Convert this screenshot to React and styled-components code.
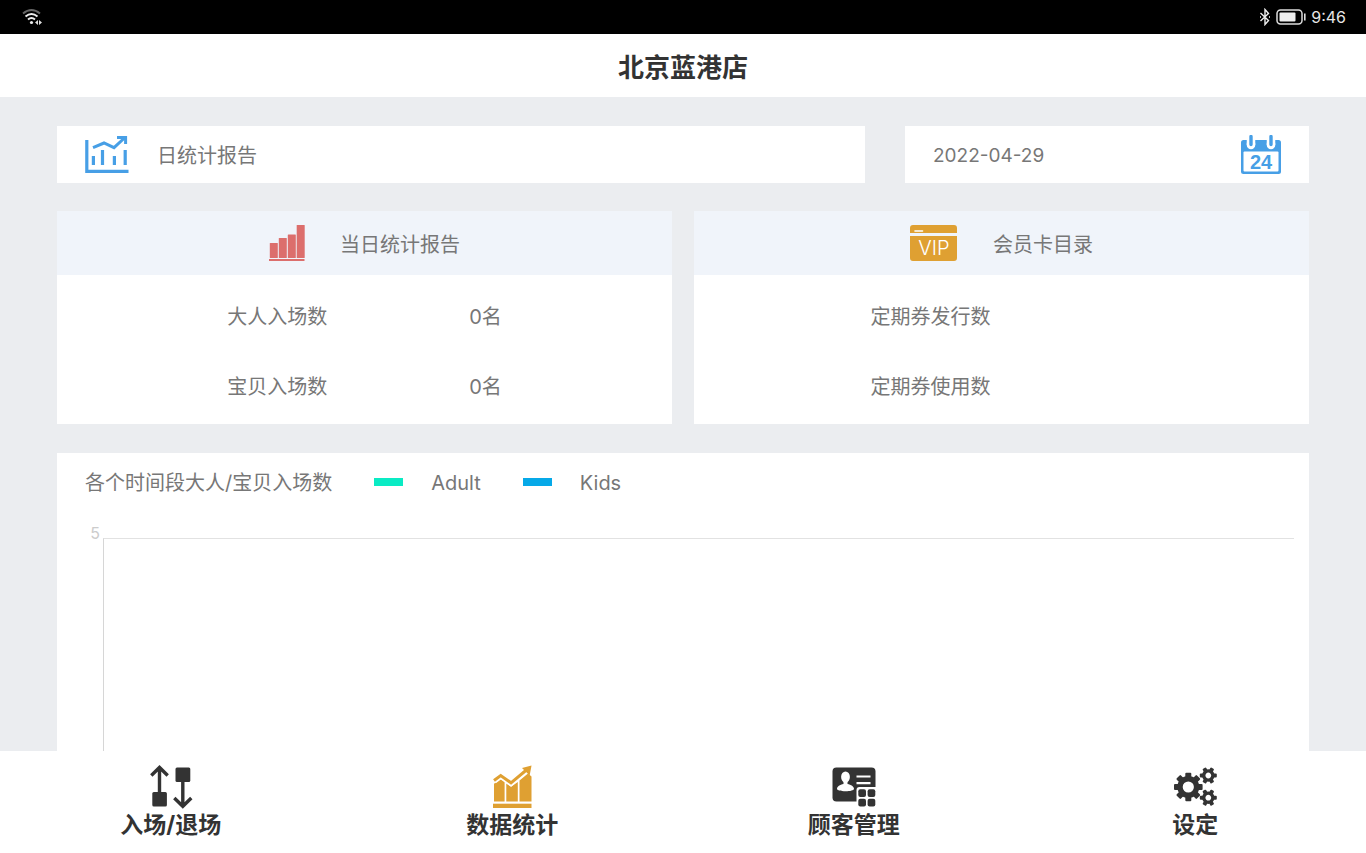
import React, {useState} from 'react';
import styled, {createGlobalStyle} from 'styled-components';

const hourlyMax = 5;

const panels = [
  {
    title: '当日统计报告',
    icon: 'bars',
    rows: [
      {label: '大人入场数', value: '0名'},
      {label: '宝贝入场数', value: '0名'}
    ]
  },
  {
    title: '会员卡目录',
    icon: 'vip',
    rows: [
      {label: '定期券发行数', value: ''},
      {label: '定期券使用数', value: ''}
    ]
  }
];

const series = [
  {name: 'Adult', color: '#0aebc4'},
  {name: 'Kids', color: '#06a9e8'}
];

const WifiIcon = () => (
  <svg width="24" height="20" viewBox="0 0 24 20" fill="none" strokeWidth="2">
    <path d="M3 6.5Q11.500-.5 20 6.500" stroke="#666" />
    <path d="M5.500 9.500Q11.500 4.500 17.500 9.500" stroke="#eee" />
    <path d="M8 12.500Q11.500 9.500 15 12.500" stroke="#eee" />
    <circle cx="11.500" cy="15.500" r="1.600" fill="#eee" />
    <path d="M18 13v5l-3-2.500zM19 13v5l3-2.500z" fill="#ddd" />
  </svg>
);

const BluetoothIcon = () => (
  <svg width="12" height="18" viewBox="0 0 12 18" fill="none" stroke="#eee" strokeWidth="1.400">
    <path d="M1.500 5l8 7.500L6 16.500v-15L9.500 5.500l-8 7.500" />
    <path d="M1 9h1M10 9h1" />
  </svg>
);

const BatteryIcon = () => (
  <svg width="30" height="16" viewBox="0 0 30 16">
    <rect x="1" y="1" width="25" height="14" rx="3.500" fill="none" stroke="#ddd" strokeWidth="1.500" />
    <rect x="3.500" y="3.500" width="16" height="9" rx="1" fill="#eee" />
    <rect x="28" y="4.500" width="1.600" height="7" fill="#ddd" />
  </svg>
);

const ReportIcon = () => (
  <svg width="44" height="40" viewBox="0 0 44 40" fill="none" stroke="#479fe6" strokeWidth="3.200">
    <path d="M1.800 5v31.400H43.500" />
    <path d="M8.400 30v-9M17.500 30V15M29.400 30v-9M40.200 30V15" />
    <path d="M8 12.600l11-4.600 10 4.600L40.500 2" strokeWidth="3" />
    <path d="M32 2.400h8.600V9" strokeWidth="3" />
  </svg>
);

const CalendarIcon = () => (
  <svg width="40" height="40" viewBox="0 0 40 40">
    <rect y="5" width="40" height="34" rx="2.500" fill="#479fe6" />
    <rect x="2.500" y="16.500" width="35" height="20" rx="1" fill="#fff" />
    <path d="M10 0v10M30 0v10" stroke="#fff" strokeWidth="8.500" />
    <path d="M10 8.500v1.500M30 8.500v1.500" stroke="#fff" strokeWidth="8.500" strokeLinecap="round" />
    <path d="M10 1.500v8M30 1.500v8" stroke="#479fe6" strokeWidth="3.400" strokeLinecap="round" />
    <text x="20" y="34" textAnchor="middle" fontFamily="Liberation Sans, sans-serif" fontSize="20" fontWeight="700" fill="#479fe6">24</text>
  </svg>
);

const BarsIcon = () => (
  <svg width="36" height="36" viewBox="0 0 36 36" fill="#dc6e6c">
    <rect x=".800" y="18" width="8" height="15" rx=".500" />
    <rect x="9.800" y="13" width="8" height="20" rx=".500" />
    <rect x="18.800" y="9.500" width="8" height="23.500" rx=".500" />
    <rect x="27.700" y="0" width="8" height="33" rx=".500" />
    <rect y="34" width="35.500" height="2" />
  </svg>
);

const VipIcon = () => (
  <svg width="48" height="36" viewBox="0 0 48 36">
    <path d="M3 0h41a3 3 0 0 1 3 3v5H0V3a3 3 0 0 1 3-3zM0 11h47v22a3 3 0 0 1-3 3H3a3 3 0 0 1-3-3z" fill="#dfa032" />
    <path d="M5 6h7.500" stroke="#fff" strokeWidth="1.600" strokeLinecap="round" />
    <text x="24" y="30" textAnchor="middle" fontFamily="Inter, sans-serif" fontSize="20" fontWeight="300" fill="#fff">VIP</text>
  </svg>
);

const EntryIcon = () => (
  <svg width="44" height="44" viewBox="0 0 44 44" fill="none" stroke="#333" strokeWidth="3.400">
    <path d="M10.500 30V3M2.300 10.500l8.200-8 8.200 8" />
    <rect x="3.300" y="27" width="14.600" height="14.500" rx="1.500" fill="#333" stroke="none" />
    <path d="M33.800 14v26M25.300 33l8.500 8.300 8.500-8.300" />
    <rect x="26.500" y="2.500" width="14.800" height="14.500" rx="1.500" fill="#333" stroke="none" />
  </svg>
);

const StatsIcon = () => (
  <svg width="44" height="44" viewBox="0 0 44 44" fill="#dfa032">
    <rect x="3" y="38.700" width="38.500" height="4.300" />
    <path d="M4 18.800l6.700-4.700 3.900 3V36.500H4zM16.300 18.500l4.700 3.200 6.800-4.600v19.400H16.300zM29.500 15.500l8.500-7 3.500 3v25h-12z" />
    <path d="M4 16l6.700-5.200L21 18 37 4.500" fill="none" stroke="#fff" strokeWidth="6" />
    <path d="M4 15.500l6.700-5 10.300 7.300L37 4.500" fill="none" stroke="#dfa032" strokeWidth="3" />
    <path d="M41.500.500l-9.500 2.600 7.700 7.400z" />
  </svg>
);

const CustomerIcon = () => (
  <svg width="44" height="44" viewBox="0 0 44 44">
    <rect x=".500" y="2.500" width="43" height="34" rx="4" fill="#333" />
    <g fill="#fff">
      <ellipse cx="13.500" cy="12" rx="4.400" ry="5.500" />
      <path d="M11.500 15h4v4c3.500.700 6.500 2.500 6.500 5 0 1.200-3.800 2.300-8.500 2.300S5 25.200 5 24c0-2.500 3-4.300 6.500-5z" />
      <path d="M24.500 10.400h14v2.200h-14zM24.500 17h14v2.200h-14z" />
      <path d="M24.500 25a3 3 0 0 1 3-3H44v22H24.500z" />
    </g>
    <g fill="#333">
      <rect x="26.300" y="24.300" width="7.700" height="7.700" rx="2" />
      <rect x="35.600" y="24.300" width="7.700" height="7.700" rx="2" />
      <rect x="26.300" y="33.700" width="7.700" height="7.700" rx="2" />
      <rect x="35.600" y="33.700" width="7.700" height="7.700" rx="2" />
    </g>
  </svg>
);

const Gear = ({x, y, r, body, hole, teeth, tooth}) => (
  <g transform={`translate(${x} ${y})`} fill="#333">
    {Array.from({length: teeth}, (_, i) => (
      <rect
        key={i}
        x={-tooth / 2}
        y={-r}
        width={tooth}
        height={r - hole - 1}
        rx="1"
        transform={`rotate(${90 + (360 / teeth) * i})`}
      />
    ))}
    <circle r={(body + hole) / 2} fill="none" stroke="#333" strokeWidth={body - hole} />
  </g>
);

const SettingsIcon = () => (
  <svg width="44" height="44" viewBox="0 0 44 44">
    <Gear x={15.300} y={22} r={14.300} body={11} hole={5.600} teeth={8} tooth={6} />
    <Gear x={35.300} y={10.500} r={8.500} body={6.200} hole={2.900} teeth={6} tooth={4} />
    <Gear x={35.300} y={32.700} r={8.500} body={6.200} hole={2.900} teeth={6} tooth={4} />
  </svg>
);

const tabs = [
  {id: 'entry', label: '入场/退场', Icon: EntryIcon},
  {id: 'stats', label: '数据统计', Icon: StatsIcon},
  {id: 'customers', label: '顾客管理', Icon: CustomerIcon},
  {id: 'settings', label: '设定', Icon: SettingsIcon}
];

const App = () => {
  const [date, setDate] = useState('2022-04-29');

  return (
    <Screen>
      <GlobalStyle />
      <StatusBar>
        <WifiIcon />
        <StatusRight>
          <BluetoothIcon />
          <BatteryIcon />
          <time>9:46</time>
        </StatusRight>
      </StatusBar>
      <TitleBar>
        <h1>北京蓝港店</h1>
      </TitleBar>
      <Content>
        <FilterRow>
          <ReportButton type="button">
            <ReportIcon />
            <span>日统计报告</span>
          </ReportButton>
          <DateField>
            <input
              type="text"
              aria-label="日期"
              value={date}
              onChange={e => setDate(e.target.value)}
            />
            <button type="button" aria-label="选择日期">
              <CalendarIcon />
            </button>
          </DateField>
        </FilterRow>
        <PanelRow>
          {panels.map(panel => (
            <Panel key={panel.title}>
              <PanelHeader>
                {panel.icon === 'vip' ? <VipIcon /> : <BarsIcon />}
                <h2>{panel.title}</h2>
              </PanelHeader>
              <PanelBody>
                {panel.rows.map(row => (
                  <StatRow key={row.label}>
                    <dt>{row.label}</dt>
                    <dd>{row.value}</dd>
                  </StatRow>
                ))}
              </PanelBody>
            </Panel>
          ))}
        </PanelRow>
        <ChartCard>
          <ChartHeader>
            <h2>各个时间段大人/宝贝入场数</h2>
            {series.map(item => (
              <LegendItem key={item.name}>
                <Swatch color={item.color} />
                {item.name}
              </LegendItem>
            ))}
          </ChartHeader>
          <Chart>
            <Tick>{hourlyMax}</Tick>
            <Plot />
          </Chart>
        </ChartCard>
      </Content>
      <TabBar>
        {tabs.map(({id, label, Icon}) => (
          <Tab key={id} href={`#${id}`}>
            <Icon />
            {label}
          </Tab>
        ))}
      </TabBar>
    </Screen>
  );
};

const GlobalStyle = createGlobalStyle`
  * {
    box-sizing: border-box;
  }
  body {
    margin: 0;
    font-family: Inter, 'Noto Sans CJK SC', sans-serif;
    font-size: 20px;
    line-height: 28px;
    color: #777;
  }
  h1, h2, dl, dd {
    margin: 0;
  }
  h2 {
    font-size: 20px;
    font-weight: 400;
  }
  button, input {
    font: inherit;
    color: inherit;
    background: none;
    border: 0;
    padding: 0;
  }
  svg {
    display: block;
    flex-shrink: 0;
  }
`;

const Screen = styled.div`
  display: flex;
  flex-direction: column;
  height: 100vh;
  background: #ebedf0;
`;

const StatusBar = styled.div`
  display: flex;
  align-items: center;
  justify-content: space-between;
  height: 34px;
  padding: 0 20px;
  background: #000;
  color: #e6e6e6;
  font-size: 16px;
`;

const StatusRight = styled.div`
  display: flex;
  align-items: center;
  gap: 5px;
`;

const TitleBar = styled.header`
  display: flex;
  align-items: center;
  justify-content: center;
  height: 63px;
  padding-top: 4px;
  background: #fff;
  h1 {
    font-size: 26px;
    font-weight: 700;
    line-height: 36px;
    color: #333;
  }
`;

const Content = styled.main`
  flex: 1;
  min-height: 0;
  overflow-y: auto;
  scrollbar-width: none;
  padding: 29px 57px 0;
`;

const FilterRow = styled.div`
  display: grid;
  grid-template-columns: 2fr 1fr;
  gap: 40px;
  margin-bottom: 28px;
`;

const ReportButton = styled.button`
  display: flex;
  align-items: center;
  gap: 28px;
  height: 57px;
  padding: 0 28px;
  background: #fff;
  text-align: left;
  span {
    padding-top: 2px;
  }
`;

const DateField = styled.div`
  display: flex;
  align-items: center;
  height: 57px;
  padding: 0 28px;
  background: #fff;
  input {
    flex: 1;
    min-width: 0;
    padding-top: 2px;
    font-size: 19px;
  }
`;

const PanelRow = styled.div`
  display: grid;
  grid-template-columns: 1fr 1fr;
  gap: 22px;
  margin-bottom: 29px;
`;

const Panel = styled.section`
  background: #fff;
`;

const PanelHeader = styled.div`
  display: flex;
  align-items: center;
  justify-content: center;
  gap: 35px;
  height: 64px;
  background: #f0f4fa;
  h2 {
    padding-top: 4px;
  }
`;

const PanelBody = styled.dl`
  padding: 7px 0 2px;
`;

const StatRow = styled.div`
  display: flex;
  align-items: center;
  justify-content: center;
  gap: 142px;
  height: 70px;
`;

const ChartCard = styled.section`
  background: #fff;
  padding: 16px 15px 0 28px;
`;

const ChartHeader = styled.div`
  display: flex;
  align-items: center;
  gap: 42px;
`;

const LegendItem = styled.div`
  display: flex;
  align-items: center;
  gap: 28px;
`;

const Swatch = styled.span`
  width: 29px;
  height: 8px;
  margin-bottom: 2px;
  background: ${props => props.color};
`;

const Chart = styled.div`
  display: flex;
  margin-top: 26px;
`;

const Tick = styled.span`
  width: 18px;
  padding-right: 3px;
  font-size: 16px;
  line-height: 20px;
  text-align: right;
  color: #ccc;
`;

const Plot = styled.div`
  flex: 1;
  height: 360px;
  margin-top: 15px;
  border-top: 1px solid #e2e2e2;
  border-left: 1px solid #d6d6d6;
`;

const TabBar = styled.nav`
  display: grid;
  grid-template-columns: repeat(4, 1fr);
  height: 102px;
  background: #fff;
`;

const Tab = styled.a`
  display: flex;
  flex-direction: column;
  align-items: center;
  gap: 2px;
  padding-top: 14px;
  font-size: 23px;
  font-weight: 700;
  color: #333;
  text-decoration: none;
`;

export default App;
